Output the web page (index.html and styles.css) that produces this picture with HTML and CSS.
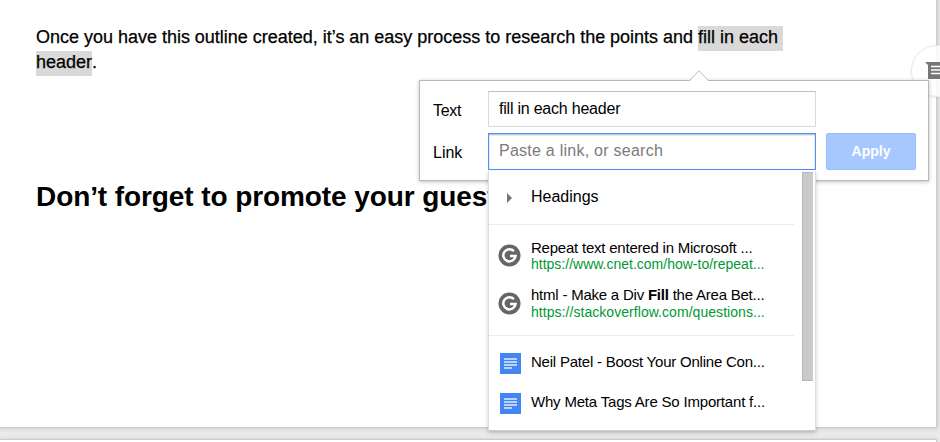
FILE: index.html
```html
<!DOCTYPE html>
<html lang="en">
<head>
<meta charset="utf-8">
<title>Document</title>
<link rel="stylesheet" href="styles.css">
</head>
<body>
<main class="page">
  <p class="para">Once you have this outline created, it’s an easy process to research the points and <mark>fill in each </mark><br><mark>header</mark>.</p>
  <h2 class="title">Don’t forget to promote your guest</h2>
</main>
<div class="next-page"></div>

<div class="comment">
  <svg width="20" height="20" viewBox="0 0 20 20"><path fill="#777" d="M0 0h20v20L16 17H3V3z"/><path stroke="#fff" stroke-width="1.4" d="M6 4.5h11M6 8h11M6 11.5h11"/></svg>
</div>

<section class="bubble">
  <svg class="arrow" width="22" height="12" viewBox="0 0 22 12"><path fill="#fff" d="M1 12 11 1l10 11z"/><path fill="none" stroke="#bbb" d="M1 11 11 .8 21 11"/></svg>
  <label class="label t-text">Text</label>
  <div class="field"><span class="t-value">fill in each header</span></div>
  <label class="label t-link">Link</label>
  <div class="field focus"><span class="t-hint">Paste a link, or search</span></div>
  <button class="apply">Apply</button>
  <div class="menu">
    <div class="group headings">
      <svg class="caret" width="6" height="10" viewBox="0 0 6 10"><path fill="#777" d="M0 0l5 5-5 5z"/></svg>
      <span class="t-head">Headings</span>
    </div>
    <div class="group web">
      <div class="item">
        <svg class="g" width="24" height="24" viewBox="0 0 24 24"><circle cx="11.5" cy="11.5" r="11" fill="#666"/><path fill="none" stroke="#fff" stroke-width="2.5" d="M15.9 7.1A6.1 6.1 0 1 0 17.5 12.1h-5.5"/></svg>
        <div class="two"><span class="name n1">Repeat text entered in Microsoft ...</span><span class="url u1">https://www.cnet.com/how-to/repeat...</span></div>
      </div>
      <div class="item">
        <svg class="g" width="24" height="24" viewBox="0 0 24 24"><circle cx="11.5" cy="11.5" r="11" fill="#666"/><path fill="none" stroke="#fff" stroke-width="2.5" d="M15.9 7.1A6.1 6.1 0 1 0 17.5 12.1h-5.5"/></svg>
        <div class="two"><span class="name n2">html - Make a Div <b>Fill</b> the Area Bet...</span><span class="url u2">https://stackoverflow.com/questions...</span></div>
      </div>
    </div>
    <div class="group docs">
      <div class="doc">
        <svg width="21" height="21" viewBox="0 0 21 21"><path fill="#4285f4" d="M0 0h21v21H0z"/><path stroke="#e3edfd" stroke-width="1.3" d="M4 6h13M4 9h13M4 12h13M4 15h8"/></svg>
        <span class="name n3">Neil Patel - Boost Your Online Con...</span>
      </div>
      <div class="doc">
        <svg width="21" height="21" viewBox="0 0 21 21"><path fill="#4285f4" d="M0 0h21v21H0z"/><path stroke="#e3edfd" stroke-width="1.3" d="M4 6h13M4 9h13M4 12h13M4 15h8"/></svg>
        <span class="name n4">Why Meta Tags Are So Important f...</span>
      </div>
    </div>
    <div class="thumb"></div>
  </div>
</section>
</body>
</html>
```
FILE: styles.css
```css
* { box-sizing: border-box; }
body {
  margin: 0;
  width: 940px;
  height: 442px;
  overflow: hidden;
  position: relative;
  background: #ebebeb;
  font-family: "Liberation Sans", Arial, sans-serif;
  color: #000;
}
.page {
  width: 937px;
  height: 428px;
  padding: 25px 36px 0;
  background: #fff;
  border-right: 1px solid #ccc;
  border-bottom: 1px solid #ccc;
  box-shadow: 0 0 4px 1px #ccc;
}
.next-page {
  width: 937px;
  height: 20px;
  margin-top: 11px;
  background: #fff;
  border: 1px solid #ccc;
  border-left: 0;
  box-shadow: 0 0 4px #ccc;
}
.para {
  margin: 0;
  font-size: 18px;
  line-height: 25px;
  letter-spacing: -0.012px;
  white-space: pre;
  -webkit-text-stroke: 0.25px #000;
}
mark {
  display: inline-block;
  height: 25px;
  background: linear-gradient(#d9d9d9, #d9d9d9) 0 1px no-repeat;
  box-shadow: 0 1px #d9d9d9;
  color: inherit;
}
.title {
  margin: 102px 0 0;
  font-size: 28px;
  line-height: 40px;
  letter-spacing: -0.09px;
  white-space: nowrap;
}
.comment {
  position: absolute;
  left: 911px;
  top: 45px;
  width: 52px;
  height: 52px;
  padding: 16px 0 0 13px;
  border: 1px solid #e8e8e8;
  border-radius: 50%;
  background: rgba(255, 255, 255, .85);
  box-shadow: 0 1px 3px rgba(0, 0, 0, .08);
}
.comment svg, .menu svg { display: block; flex: none; }
.bubble {
  position: absolute;
  left: 419px;
  top: 80px;
  width: 510px;
  height: 101px;
  padding: 10px 12px 0 13px;
  display: grid;
  grid-template-columns: 55px 328px 100px;
  grid-template-rows: 36px 37px;
  row-gap: 6px;
  background: #fff;
  border: 1px solid #b8b8b8;
  box-shadow: 0 1px 4px rgba(0, 0, 0, .25);
}
.arrow { position: absolute; left: 268px; top: -11px; }
.label { grid-column: 1; font-size: 16px; line-height: 39px; white-space: nowrap; }
.t-text { letter-spacing: -0.3px; }
.field {
  grid-column: 2;
  padding-left: 10px;
  border: 1px solid #d9d9d9;
  border-top-color: #c0c0c0;
  font-size: 16px;
  line-height: 33px;
  white-space: nowrap;
}
.t-value { letter-spacing: -0.22px; }
.t-hint { letter-spacing: 0.25px; }
.focus {
  border-color: #4d90fe;
  box-shadow: inset 0 1px 2px rgba(0, 0, 0, .3);
  color: #7b7b7b;
}
.apply {
  grid-column: 3;
  grid-row: 2;
  margin-left: 10px;
  width: 90px;
  padding: 0 0 2px;
  border: 1px solid #98bffd;
  border-radius: 2px;
  background: #a6c8ff;
  color: #fff;
  font: bold 14px "Liberation Sans", sans-serif;
}
.menu {
  position: absolute;
  left: 68px;
  top: 90px;
  width: 328px;
  height: 260px;
  padding-right: 21px;
  background: #fff;
  border: 1px solid #ddd;
  border-top: 0;
  border-bottom-color: #ccc;
  box-shadow: 0 2px 4px rgba(0, 0, 0, .2);
  white-space: nowrap;
}
.group + .group { border-top: 1px solid #ebebeb; }
.headings { height: 53px; display: flex; align-items: center; padding: 0 0 2px 18px; gap: 18px; font-size: 16px; }
.caret { margin-top: 3px; }
.web { height: 111px; padding: 14px 0 0 9px; }
.item { display: flex; gap: 9px; height: 48px; }
.g { margin-top: 5px; }
.two { display: flex; flex-direction: column; }
.name { font-size: 15px; line-height: 17px; letter-spacing: -0.22px; }
.n2 { line-height: 16px; padding-bottom: 1px; }
.n4 { letter-spacing: -0.19px; }
.url { font-size: 14px; line-height: 17px; color: #093; }
.u2 { letter-spacing: 0.05px; }
.docs { padding: 17px 0 0 11px; }
.doc { display: flex; gap: 10px; height: 40px; }
.doc .name { line-height: 18px; }
.thumb {
  position: absolute;
  left: 313px;
  top: 1px;
  width: 11px;
  height: 209px;
  background: #cacaca;
  border: 1px solid #b8b8b8;
  border-right: 0;
}
```
